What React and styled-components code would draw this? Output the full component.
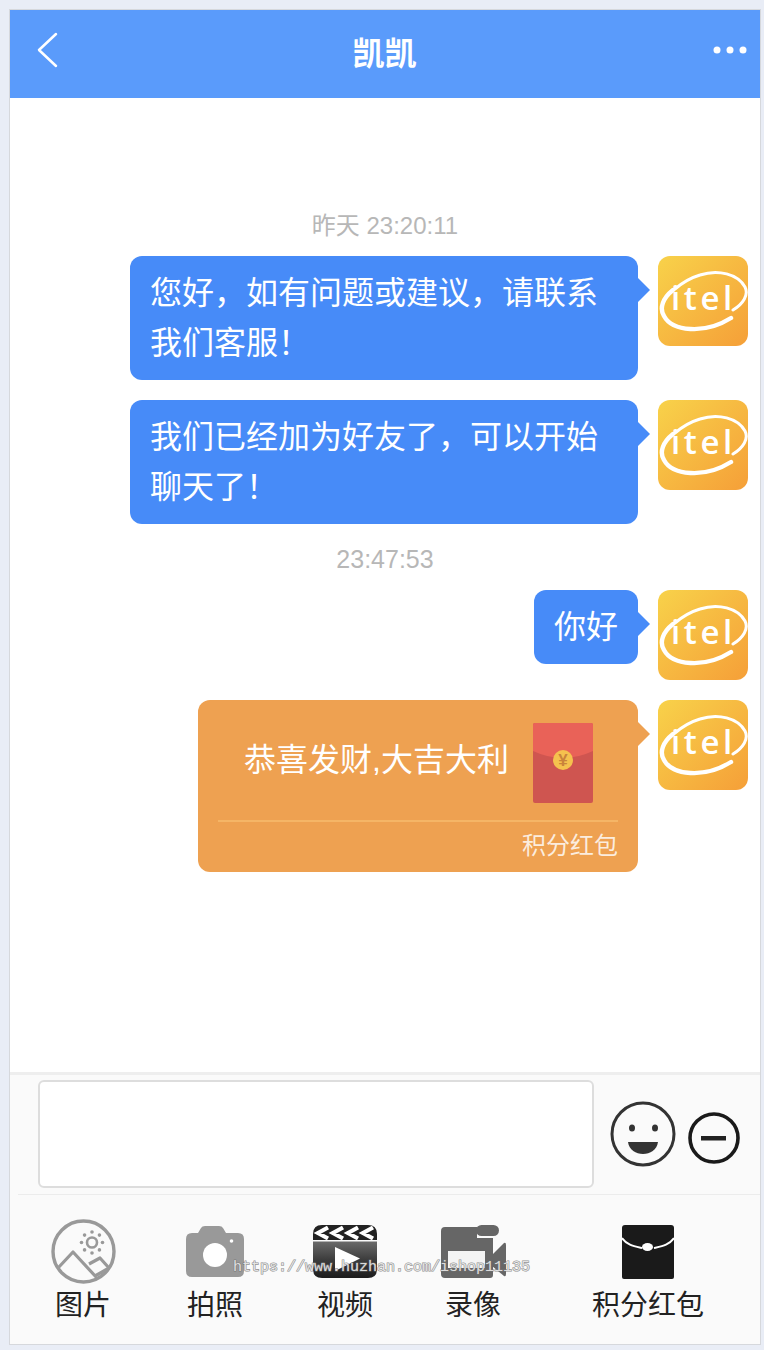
import React from 'react';
import styled, { createGlobalStyle } from 'styled-components';

const GlobalStyle = createGlobalStyle`
  html, body {
    margin: 0;
    padding: 0;
    background: #e9edf6;
  }
  * { box-sizing: border-box; }
`;

const Page = styled.div`
  width: 764px;
  height: 1350px;
  padding: 9px 3px 5px 9px;
  font-family: "Liberation Sans", "Noto Sans CJK SC", sans-serif;
`;

const Frame = styled.div`
  height: 100%;
  border: 1px solid #d6d8dc;
  display: flex;
  flex-direction: column;
  background: #fff;
`;

const Header = styled.header`
  height: 88px;
  flex: none;
  background: #5a9bfb;
  display: flex;
  align-items: center;
  justify-content: space-between;
  padding: 0 13px 8px 26px;
`;

const Title = styled.h1`
  margin: 8px 0 0;
  color: #fff;
  font-size: 32px;
  font-weight: 700;
  line-height: 40px;
  padding-right: 2px;
`;

const Chat = styled.main`
  flex: 1;
  padding-top: 113px;
  background: #fff;
`;

const Stamp = styled.div`
  text-align: center;
  color: #b7b7b7;
  font-size: ${(p) => p.$size}px;
  line-height: 30px;
  margin-bottom: ${(p) => p.$after}px;
`;

const Row = styled.div`
  display: flex;
  justify-content: flex-end;
  align-items: flex-start;
  gap: 20px;
  padding-right: 12px;
  margin-bottom: 20px;
`;

const Bubble = styled.div`
  position: relative;
  width: ${(p) => p.$width || 'auto'};
  background: ${(p) => p.$bg || '#478bf8'};
  border-radius: 12px;
  color: #fff;
  font-size: 32px;
  line-height: 50px;
  padding: 12px 20px;

  &::after {
    content: '';
    position: absolute;
    right: -12px;
    top: 22px;
    border-left: 12px solid ${(p) => p.$bg || '#478bf8'};
    border-top: 12px solid transparent;
    border-bottom: 12px solid transparent;
  }
`;

const PacketBubble = styled(Bubble)`
  height: 172px;
  padding: 0 20px;
`;

const PacketBody = styled.div`
  display: flex;
  align-items: flex-start;
  justify-content: space-between;
  height: 122px;
  padding: 23px 25px 0 26px;
  border-bottom: 2px solid #f5b566;
`;

const PacketText = styled.span`
  margin-top: 12px;
  font-size: 32px;
  line-height: 50px;
`;

const PacketLabel = styled.div`
  text-align: right;
  font-size: 24px;
  line-height: 30px;
  padding-top: 9px;
  color: rgba(255, 255, 255, 0.82);
`;

const Footer = styled.footer`
  flex: none;
  position: relative;
  height: 272px;
  background: #fafafa;
  border-top: 3px solid #eeeeee;
`;

const InputRow = styled.div`
  display: flex;
  align-items: flex-start;
  height: 120px;
  margin-left: 8px;
  padding: 5px 0 0 20px;
  border-bottom: 1px solid #ececec;
`;

const Input = styled.textarea`
  width: 556px;
  height: 108px;
  flex: none;
  resize: none;
  background: #fff;
  border: 2px solid #dddddd;
  border-radius: 6px;
  outline: none;
`;

const SmileButton = styled.div`
  margin: 21px 0 0 16px;
  display: flex;
`;

const PlusButton = styled.div`
  margin: 32px 0 0 12px;
  display: flex;
`;

const Tools = styled.div`
  display: flex;
  padding: 24px 0 0 9px;
`;

const Tool = styled.div`
  width: ${(p) => p.$width}px;
  display: flex;
  flex-direction: column;
  align-items: center;
`;

const ToolIcon = styled.div`
  height: 65px;
  display: flex;
  align-items: center;
  justify-content: center;
`;

const ToolLabel = styled.div`
  margin-top: 2px;
  font-size: 28px;
  line-height: 40px;
  color: #222;
`;

const Watermark = styled.div`
  position: absolute;
  left: 223px;
  top: 183px;
  font-family: "Liberation Mono", monospace;
  font-size: 15px;
  line-height: 20px;
  white-space: nowrap;
  color: rgba(250, 250, 250, 0.8);
  -webkit-text-stroke: 1.2px rgba(115, 115, 115, 0.8);
  paint-order: stroke fill;
`;

const BackIcon = () => (
  <svg width="22" height="36" viewBox="0 0 22 36">
    <path d="M20 2 L3 18 L20 34" fill="none" stroke="#fff" strokeWidth="2.5" strokeLinecap="round" strokeLinejoin="round" />
  </svg>
);

const MoreIcon = () => (
  <svg width="34" height="8" viewBox="0 0 34 8">
    <circle cx="4" cy="4" r="3.5" fill="#fff" />
    <circle cx="17" cy="4" r="3.5" fill="#fff" />
    <circle cx="30" cy="4" r="3.5" fill="#fff" />
  </svg>
);

const Avatar = () => (
  <svg width="90" height="90" viewBox="0 0 90 90" style={{ flex: 'none' }}>
    <defs>
      <linearGradient id="itelBg" x1="0" y1="0" x2="1" y2="1">
        <stop offset="0" stopColor="#f8d24a" />
        <stop offset="1" stopColor="#f59f38" />
      </linearGradient>
    </defs>
    <rect width="90" height="90" rx="12" fill="url(#itelBg)" />
    <path d="M75 54 C85 48 91 39 87 31 C80 18 60 13 42 19 C32 22 24 27 17 33" fill="none" stroke="#fff" strokeWidth="3" strokeLinecap="round" />
    <path d="M15 34 C5 42 1 52 6 60 C14 75 46 79 73 62" fill="none" stroke="#fff" strokeWidth="4.4" strokeLinecap="round" />
    <text x="13" y="54" fill="#fff" fontFamily="Open Sans, sans-serif" fontWeight="600" fontSize="33" letterSpacing="3.6">itel</text>
  </svg>
);

const RedPacket = () => (
  <svg width="60" height="80" viewBox="0 0 60 80">
    <rect width="60" height="80" rx="2" fill="#cf5550" />
    <path d="M0 2 Q0 0 2 0 H58 Q60 0 60 2 V28 Q30 42 0 28 Z" fill="#e96258" />
    <circle cx="30" cy="37" r="10" fill="#f5c14e" />
    <text x="30" y="43" textAnchor="middle" fill="#c9833b" fontFamily="Liberation Sans, sans-serif" fontWeight="700" fontSize="17">¥</text>
  </svg>
);

const SmileIcon = () => (
  <svg width="66" height="66" viewBox="0 0 66 66">
    <circle cx="33" cy="33" r="31" fill="none" stroke="#333" strokeWidth="3" />
    <ellipse cx="22" cy="27" rx="3" ry="3.5" fill="#333" />
    <ellipse cx="45" cy="27" rx="3" ry="3.5" fill="#333" />
    <path d="M18 41 H48 C47 49 40 53 33 53 C26 53 19 49 18 41 Z" fill="#333" />
  </svg>
);

const MinusIcon = () => (
  <svg width="52" height="52" viewBox="0 0 52 52">
    <circle cx="26" cy="26" r="24" fill="none" stroke="#1a1a1a" strokeWidth="3.6" />
    <rect x="13" y="24" width="25" height="4.5" fill="#222" />
  </svg>
);

const sunDots = [0, 45, 90, 135, 180, 225, 270, 315];

const ImageIcon = () => (
  <svg width="65" height="65" viewBox="0 0 65 65">
    <circle cx="32.5" cy="32.5" r="30.5" fill="none" stroke="#999" strokeWidth="3.4" />
    <circle cx="41" cy="23.5" r="5" fill="none" stroke="#999" strokeWidth="2.6" />
    {sunDots.map((a) => (
      <circle
        key={a}
        cx={41 + 10.5 * Math.cos((a * Math.PI) / 180)}
        cy={23.5 + 10.5 * Math.sin((a * Math.PI) / 180)}
        r="1.8"
        fill="#999"
      />
    ))}
    <path d="M7 49 L22 33 L46 59 M38 45 L49 39 L58 49 M44 57 L58 49" fill="none" stroke="#999" strokeWidth="3.2" strokeLinejoin="round" />
  </svg>
);

const CameraIcon = () => (
  <svg width="58" height="51" viewBox="0 0 58 51">
    <path d="M6 7 H12 L15 2 Q16 0 19 0 H33 Q36 0 37 2 L40 7 H52 Q58 7 58 13 V45 Q58 51 52 51 H6 Q0 51 0 45 V13 Q0 7 6 7 Z" fill="#999" />
    <circle cx="29" cy="29" r="12" fill="#fff" />
    <circle cx="45.5" cy="15" r="1.8" fill="#fff" />
  </svg>
);

const ClapperIcon = () => (
  <svg width="64" height="53" viewBox="0 0 64 53">
    <defs>
      <linearGradient id="clapBody" x1="0" y1="0" x2="0" y2="1">
        <stop offset="0" stopColor="#6a6a6a" />
        <stop offset="0.5" stopColor="#3c3c3c" />
        <stop offset="1" stopColor="#1c1c1c" />
      </linearGradient>
    </defs>
    <path d="M9 0 H55 Q64 0 64 9 V15 H0 V9 Q0 0 9 0 Z" fill="#222" />
    <path d="M0 16.5 H64 V44 Q64 53 55 53 H9 Q0 53 0 44 Z" fill="url(#clapBody)" />
    <path d="M15 2.5 L5 8 L15 13.5 M30 2.5 L20 8 L30 13.5 M45 2.5 L35 8 L45 13.5 M60 2.5 L50 8 L60 13.5" fill="none" stroke="#fff" strokeWidth="4.2" />
    <path d="M22 22 V46 L47 33.5 Z" fill="#fff" />
  </svg>
);

const VideoIcon = () => (
  <svg width="65" height="53" viewBox="0 0 65 53">
    <rect x="35" y="0" width="23" height="11" rx="5.5" fill="#666" />
    <path d="M4 2 H36 V13 H52 V50 Q52 53 49 53 H4 Q0 53 0 49 V6 Q0 2 4 2 Z" fill="#666" />
    <rect x="7" y="26" width="37" height="17" fill="#f4f4f4" />
    <path d="M51 30 L63 18 Q65 17 65 20 V49 Q65 52 63 51 L51 41 Z" fill="#666" />
  </svg>
);

const EnvelopeIcon = () => (
  <svg width="52" height="54" viewBox="0 0 52 54">
    <path d="M3 0 H49 Q52 0 52 3 V52 Q52 54 50 54 H2 Q0 54 0 52 V3 Q0 0 3 0 Z" fill="#1a1a1a" />
    <path d="M0 13 C5 20 11 21 20 23 M32 23 C41 21 47 20 52 13" fill="none" stroke="#fff" strokeWidth="2" />
    <ellipse cx="25.5" cy="22" rx="5.5" ry="4" fill="#fff" />
  </svg>
);

const tools = [
  { label: '图片', width: 128, icon: <ImageIcon /> },
  { label: '拍照', width: 136, icon: <CameraIcon /> },
  { label: '视频', width: 124, icon: <ClapperIcon /> },
  { label: '录像', width: 132, icon: <VideoIcon /> },
  { label: '积分红包', width: 218, icon: <EnvelopeIcon /> },
];

const App = () => {
  return (
    <Page>
      <GlobalStyle />
      <Frame>
        <Header>
          <BackIcon />
          <Title>凯凯</Title>
          <MoreIcon />
        </Header>
        <Chat>
          <Stamp $size={24} $after={15}>昨天 23:20:11</Stamp>
          <Row>
            <Bubble $width="508px">您好，如有问题或建议，请联系我们客服！</Bubble>
            <Avatar />
          </Row>
          <Row>
            <Bubble $width="508px">我们已经加为好友了，可以开始聊天了！</Bubble>
            <Avatar />
          </Row>
          <Stamp $size={25} $after={16}>23:47:53</Stamp>
          <Row>
            <Bubble>你好</Bubble>
            <Avatar />
          </Row>
          <Row>
            <PacketBubble $width="440px" $bg="#eea151">
              <PacketBody>
                <PacketText>恭喜发财,大吉大利</PacketText>
                <RedPacket />
              </PacketBody>
              <PacketLabel>积分红包</PacketLabel>
            </PacketBubble>
            <Avatar />
          </Row>
        </Chat>
        <Footer>
          <InputRow>
            <Input />
            <SmileButton><SmileIcon /></SmileButton>
            <PlusButton><MinusIcon /></PlusButton>
          </InputRow>
          <Tools>
            {tools.map((t) => (
              <Tool key={t.label} $width={t.width}>
                <ToolIcon>{t.icon}</ToolIcon>
                <ToolLabel>{t.label}</ToolLabel>
              </Tool>
            ))}
          </Tools>
          <Watermark>https://www.huzhan.com/ishop11135</Watermark>
        </Footer>
      </Frame>
    </Page>
  );
};

export default App;
